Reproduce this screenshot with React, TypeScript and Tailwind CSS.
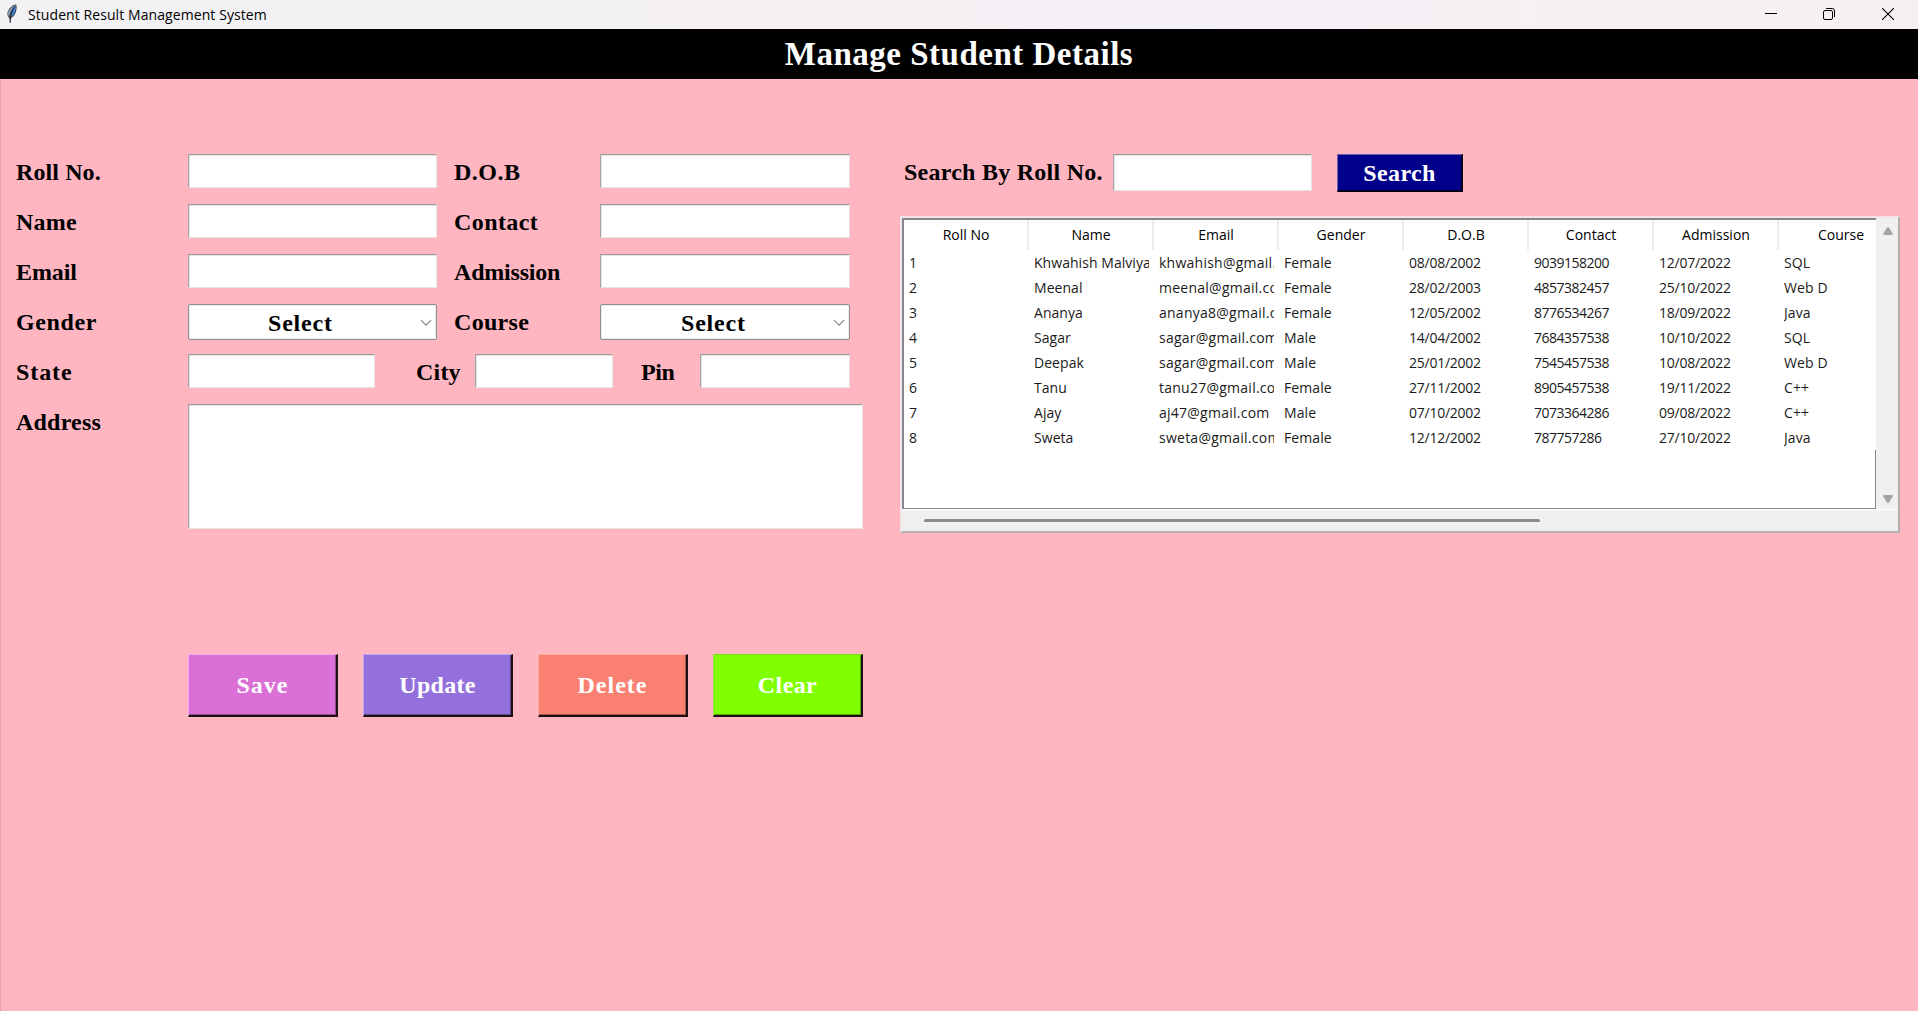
import React from "react";

const LABEL =
  "font-['Liberation_Serif',serif] text-[24px] font-bold leading-9 text-black whitespace-nowrap";

function Label({ text, className }: { text: string; className: string }) {
  return <label className={`${LABEL} shrink-0 ${className}`}>{text}</label>;
}

const SUNKEN =
  "block shrink-0 bg-white border border-t-[#9a9a9a] border-l-[#a3a3a3] border-r-[#e6e3e3] border-b-[#e6e3e3] outline-none shadow-[inset_1px_1px_0_#e4e4e4]";

function Entry({ className, name }: { className: string; name: string }) {
  return <input aria-label={name} className={`${SUNKEN} ${className}`} />;
}

function Combo({ name, className }: { name: string; className: string }) {
  return (
    <button
      type="button"
      aria-label={name}
      className={`relative flex h-9 shrink-0 items-center rounded-[2px] border border-[#8f8f8f] bg-white pt-px shadow-[inset_0_0_0_1px_#ededed] ${className}`}
    >
      <span className={`${LABEL} tracking-[0.8px]`}>Select</span>
      <svg
        className="absolute right-[4px] top-[14px]"
        width="12"
        height="8"
        viewBox="0 0 12 8"
        fill="none"
        stroke="#858585"
        strokeWidth="1.2"
      >
        <path d="M1 1.2 6 6.2 11 1.2" />
      </svg>
    </button>
  );
}

const pairs = [
  { left: "Roll No.", leftCls: "tracking-[0.1px]", right: "D.O.B", rightCls: "tracking-[0.5px]" },
  { left: "Name", leftCls: "tracking-[0.2px]", right: "Contact", rightCls: "tracking-[0.4px]" },
  { left: "Email", leftCls: "tracking-[-0.1px]", right: "Admission", rightCls: "tracking-[-0.2px]" },
  { left: "Gender", leftCls: "tracking-[0.6px]", right: "Course", rightCls: "tracking-[0.3px]", combo: true },
];

const buttons = [
  {
    text: "Save",
    cls: "bg-[#da70d6] border-t-[#f5a8f3] border-l-[#f5a8f3] shadow-[inset_-1px_-1px_0_#8d4a8b]",
    spacing: "tracking-[1px]",
  },
  {
    text: "Update",
    cls: "bg-[#9370db] border-t-[#bda6f5] border-l-[#bda6f5] shadow-[inset_-1px_-1px_0_#5f488e]",
    spacing: "tracking-[0.3px]",
  },
  {
    text: "Delete",
    cls: "bg-[#fa8072] border-t-[#ffaca0] border-l-[#ffaca0] shadow-[inset_-1px_-1px_0_#a1534a]",
    spacing: "tracking-[1px]",
  },
  {
    text: "Clear",
    cls: "bg-[#7fff00] border-t-[#77e00a] border-l-[#8fe040] shadow-[inset_-1px_-1px_0_#52a500]",
    spacing: "tracking-[0.4px]",
  },
];

const columns = [
  { title: "Roll No", cell: "tracking-[-0.5px]" },
  { title: "Name", cell: "tracking-[0.05px]" },
  { title: "Email", cell: "tracking-[0.25px]" },
  { title: "Gender", cell: "tracking-[0.1px]" },
  { title: "D.O.B", cell: "tracking-[-0.25px]" },
  { title: "Contact", cell: "tracking-[-0.5px]" },
  { title: "Admission", cell: "tracking-[-0.25px]" },
  { title: "Course", cell: "tracking-[0.1px]" },
];

const rows = [
  ["1", "Khwahish Malviya", "khwahish@gmail.com", "Female", "08/08/2002", "9039158200", "12/07/2022", "SQL"],
  ["2", "Meenal", "meenal@gmail.com", "Female", "28/02/2003", "4857382457", "25/10/2022", "Web D"],
  ["3", "Ananya", "ananya8@gmail.com", "Female", "12/05/2002", "8776534267", "18/09/2022", "Java"],
  ["4", "Sagar", "sagar@gmail.com", "Male", "14/04/2002", "7684357538", "10/10/2022", "SQL"],
  ["5", "Deepak", "sagar@gmail.com", "Male", "25/01/2002", "7545457538", "10/08/2022", "Web D"],
  ["6", "Tanu", "tanu27@gmail.com", "Female", "27/11/2002", "8905457538", "19/11/2022", "C++"],
  ["7", "Ajay", "aj47@gmail.com", "Male", "07/10/2002", "7073364286", "09/08/2022", "C++"],
  ["8", "Sweta", "sweta@gmail.com", "Female", "12/12/2002", "787757286", "27/10/2022", "Java"],
];

function Feather() {
  return (
    <svg width="12" height="20" viewBox="0 0 12 20" className="mb-[1px]">
      <path d="M10.2.4c1 1.600.4 7.200-1.600 10.400-1 1.600-2.600 3-3.600 3.400L4.200 19.500 3.200 14C.6 11.600 1 8 3.400 4.600 5.400 1.800 8.200.2 10.200.4Z" fill="#4a4c52" />
      <path d="M9.900 1.200c.4 2-.4 6.200-2 8.800-.8 1.400-1.800 2.600-2.900 3C5 8.600 6.800 4.600 9.900 1.200Z" fill="#3f7fd0" />
      <path d="M9.200 1.200C6 2.400 2.500 6 2.100 9.600c-.1 1 .2 2.200.9 3C3.600 8.600 5.800 4.400 9.200 1.200Z" fill="#93a9c6" />
      <path d="M8.600 3C6 6.400 4.400 10 4.100 19" stroke="#16181c" strokeWidth=".8" fill="none" />
    </svg>
  );
}

function TitleBar() {
  return (
    <header className="flex h-[29px] shrink-0 items-center justify-between bg-[linear-gradient(90deg,#f2f2f4_0%,#f2f2f4_24%,#f5f1f0_37%,#f7f0f2_43%,#f4eff7_58%,#f5f1f4_80%,#f6f1f0_86%,#f7f0f2_100%)]">
      <div className="flex items-center pl-[6px]">
        <Feather />
        <span className="ml-[10px] font-['Open_Sans',sans-serif] text-[14px] leading-5 tracking-[0.08px] text-black">
          Student Result Management System
        </span>
      </div>
      <div className="flex items-center pr-[24px] pb-[2px]">
        <svg width="12" height="12" viewBox="0 0 12 12" className="mr-[46px]">
          <path d="M0 5.500h12" stroke="#000" />
        </svg>
        <svg width="12" height="12" viewBox="0 0 12 12" className="mr-[47px]" fill="none" stroke="#000">
          <path d="M3 .5h6.200A2.300 2.300 0 0 1 11.500 2.800V9" />
          <rect x=".5" y="2.500" width="9" height="9" rx="1.500" />
        </svg>
        <svg width="12" height="12" viewBox="0 0 12 12" fill="none" stroke="#000" strokeWidth="1.100">
          <path d="M0 0 12 12M12 0 0 12" />
        </svg>
      </div>
    </header>
  );
}

function StudentForm() {
  return (
    <form className="w-[863px] pl-[15px]">
      {pairs.map((p) => (
        <div key={p.left} className="flex h-[50px] items-start">
          <Label text={p.left} className={`w-[172px] ${p.leftCls}`} />
          {p.combo ? (
            <Combo name={p.left} className="w-[249px] pl-[79px]" />
          ) : (
            <Entry name={p.left} className="h-[34px] w-[249px]" />
          )}
          <Label text={p.right} className={`ml-[17px] w-[146px] ${p.rightCls}`} />
          {p.combo ? (
            <Combo name={p.right} className="w-[250px] pl-[80px]" />
          ) : (
            <Entry name={p.right} className="h-[34px] w-[250px]" />
          )}
        </div>
      ))}
      <div className="flex h-[50px] items-start">
        <Label text="State" className="w-[172px] tracking-[0.9px]" />
        <Entry name="State" className="h-[34px] w-[187px]" />
        <Label text="City" className="ml-[41px] w-[59px] tracking-[0.2px]" />
        <Entry name="City" className="h-[34px] w-[138px]" />
        <Label text="Pin" className="ml-[28px] w-[59px] tracking-[-0.4px]" />
        <Entry name="Pin" className="h-[34px] w-[150px]" />
      </div>
      <div className="flex items-start">
        <Label text="Address" className="w-[172px] tracking-[0.2px]" />
        <textarea aria-label="Address" className={`${SUNKEN} h-[125px] w-[675px] resize-none`} />
      </div>
      <div className="mt-[125px] flex gap-[25px] pl-[172px]">
        {buttons.map((b) => (
          <button
            key={b.text}
            type="button"
            className={`flex h-[63px] w-[150px] items-center justify-center border border-r-2 border-b-2 border-r-[#1c1015] border-b-[#1c1015] ${b.cls}`}
          >
            <span className={`font-['Liberation_Serif',serif] text-[24px] font-bold leading-9 text-white ${b.spacing}`}>
              {b.text}
            </span>
          </button>
        ))}
      </div>
    </form>
  );
}

function ResultsTable() {
  return (
    <div className="mt-[24px] flex h-[317px] w-[1000px] flex-col border-2 border-t-[#f3e3e5] border-l-[#f3e6e8] border-r-[#b4adae] border-b-[#b5b0b1] bg-[#f0f0f0] font-['Open_Sans',sans-serif] text-[14px] text-[#1a1a1a]">
      <div className="flex h-[291px] shrink-0">
        <div className="h-[291px] w-[974px] shrink-0 overflow-hidden border-t-2 border-b border-l-2 border-[#828790] bg-white">
          <div className="flex h-[30px] w-[1000px]">
            {columns.map((c) => (
              <div
                key={c.title}
                className="flex w-[125px] shrink-0 items-center justify-center border-r-2 border-[#ececec] pb-px pl-px text-black"
              >
                {c.title}
              </div>
            ))}
          </div>
          {rows.map((r) => (
            <div key={r[0]} className="flex h-[25px] w-[1000px]">
              {r.map((cell, i) => (
                <div key={i} className="w-[125px] shrink-0 pr-[5px] pl-[5px]">
                  <div className={`overflow-hidden leading-[25px] whitespace-nowrap ${columns[i].cell}`}>{cell}</div>
                </div>
              ))}
            </div>
          ))}
          <div className="h-[58px] w-[972px] border-r border-[#828790]" />
        </div>
        <div className="flex w-[22px] flex-col items-center justify-between pt-[9px] pb-[6px] pl-px">
          <svg width="10" height="8" viewBox="0 0 10 8">
            <path d="M4 .6Q5-.4 6 .6L9.700 6.600Q10 8 9 8H1Q0 8 .3 6.600Z" fill="#a3a3a3" />
          </svg>
          <svg width="10" height="8" viewBox="0 0 10 8">
            <path d="M4 7.400Q5 8.400 6 7.400L9.700 1.400Q10 0 9 0H1Q0 0 .3 1.400Z" fill="#a3a3a3" />
          </svg>
        </div>
      </div>
      <div className="flex h-[22px] items-center border-t border-white pl-[22px]">
        <div className="h-[3px] w-[616px] rounded-full bg-[#8c8c8c]" />
      </div>
    </div>
  );
}

export default function App() {
  return (
    <div className="flex h-[1011px] w-[1918px] flex-col overflow-hidden bg-[#ffb6c1]">
      <TitleBar />
      <h1 className="flex h-[50px] shrink-0 items-center justify-center bg-black pt-[2px] font-['Liberation_Serif',serif] text-[33px] font-bold tracking-[0.5px] text-white">
        Manage Student Details
      </h1>
      <main className="flex flex-1 border-l border-[#e3a3ad] pt-[75px]">
        <StudentForm />
        <section className="ml-[36px]">
          <div className="flex items-start pl-[4px]">
            <Label text="Search By Roll No." className="w-[209px] tracking-[0.25px]" />
            <Entry name="Search By Roll No." className="h-[37px] w-[199px]" />
            <button
              type="button"
              className="ml-[25px] flex h-[38px] w-[126px] items-center justify-center border border-t-[#6a5fb0] border-r-2 border-b-2 border-l-[#6a5fb0] border-r-[#050018] border-b-[#050018] bg-[#00008b] pt-px"
            >
              <span className="font-['Liberation_Serif',serif] text-[24px] leading-9 font-bold tracking-[0.4px] text-white">
                Search
              </span>
            </button>
          </div>
          <ResultsTable />
        </section>
      </main>
    </div>
  );
}
